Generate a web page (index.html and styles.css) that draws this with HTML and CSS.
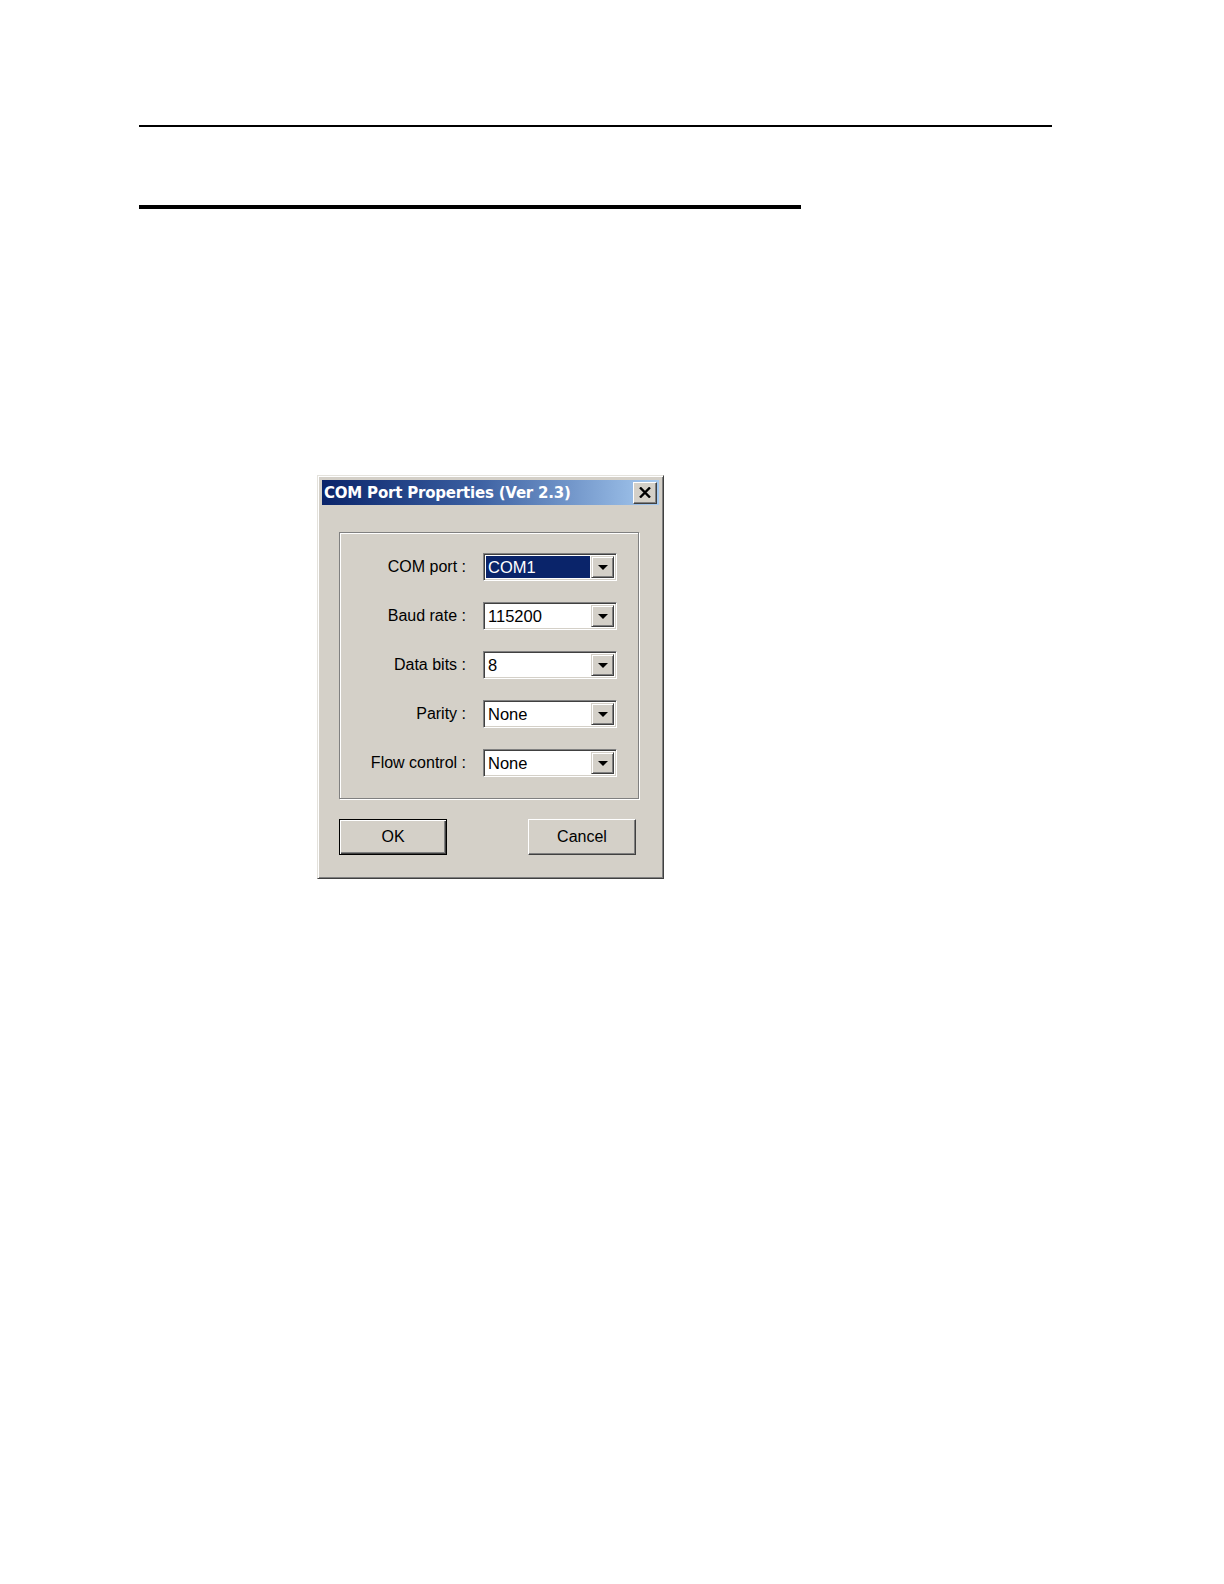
FILE: index.html
```html
<!DOCTYPE html>
<html>
<head>
<meta charset="utf-8">
<link rel="stylesheet" href="styles.css">
</head>
<body>
<div class="page">
  <div class="rule-top"></div>
  <div class="rule-second"></div>
  <div class="dialog">
    <div class="titlebar">
      <span class="title">COM Port Properties (Ver 2.3)</span>
      <span class="close"><svg width="12" height="11" viewBox="0 0 12 11"><path d="M1 0.5 L11 10.5 M11 0.5 L1 10.5" stroke="#000" stroke-width="2.4" fill="none"/></svg></span>
    </div>
    <div class="body">
      <div class="group">
        <div class="grid">
          <div class="label">COM port :</div>
          <div class="combo"><span class="value selected">COM1</span><span class="drop"><span class="arrow"></span></span></div>
          <div class="label">Baud rate :</div>
          <div class="combo"><span class="value">115200</span><span class="drop"><span class="arrow"></span></span></div>
          <div class="label">Data bits :</div>
          <div class="combo"><span class="value">8</span><span class="drop"><span class="arrow"></span></span></div>
          <div class="label">Parity :</div>
          <div class="combo"><span class="value">None</span><span class="drop"><span class="arrow"></span></span></div>
          <div class="label">Flow control :</div>
          <div class="combo"><span class="value">None</span><span class="drop"><span class="arrow"></span></span></div>
        </div>
      </div>
      <div class="buttons">
        <div class="btn default">OK</div>
        <div class="btn">Cancel</div>
      </div>
    </div>
  </div>
</div>
</body>
</html>
```
FILE: styles.css
```css
html, body {
  margin: 0;
  padding: 0;
  background: #ffffff;
}
.page {
  padding-top: 125px;
  padding-left: 139px;
}
.rule-top {
  width: 913px;
  height: 2px;
  background: #000;
}
.rule-second {
  margin-top: 78px;
  width: 662px;
  height: 4px;
  background: #000;
}
.dialog {
  margin-top: 266px;
  margin-left: 178px;
  width: 347px;
  height: 404px;
  box-sizing: border-box;
  background: #d4d0c8;
  border: 1px solid;
  border-color: #e4e2dc #404040 #404040 #e4e2dc;
  box-shadow: inset 1px 1px #ffffff, inset -1px -1px #808080;
  padding: 4px;
  font-family: "Liberation Sans", Arial, sans-serif;
}
.titlebar {
  height: 25px;
  background: linear-gradient(to right, #0a246a 0%, #3a5ea0 45%, #a6caf0 100%);
  display: flex;
  align-items: center;
  justify-content: space-between;
  padding: 0 2px 0 2px;
}
.title {
  color: #fff;
  font-family: "DejaVu Sans", Verdana, sans-serif;
  font-weight: bold;
  font-size: 15px;
  letter-spacing: -0.2px;
}
.close {
  width: 24px;
  height: 22px;
  box-sizing: border-box;
  background: #d4d0c8;
  border: 1px solid;
  border-color: #ffffff #404040 #404040 #ffffff;
  box-shadow: inset -1px -1px #808080;
  display: flex;
  align-items: center;
  justify-content: center;
}
.body {
  padding: 27px 0 0 17px;
}
.group {
  width: 300px;
  height: 267px;
  box-sizing: border-box;
  border: 1px solid #808080;
  box-shadow: inset 1px 1px #ffffff, 1px 1px #ffffff;
  padding-top: 20px;
}
.grid {
  display: grid;
  grid-template-columns: 126px 134px;
  column-gap: 17px;
  row-gap: 21px;
  align-items: center;
}
.label {
  text-align: right;
  font-size: 16px;
  color: #000;
}
.combo {
  height: 28px;
  box-sizing: border-box;
  border: 1px solid;
  border-color: #808080 #ffffff #ffffff #808080;
  box-shadow: inset 1px 1px #404040, inset -1px -1px #d4d0c8;
  background: #fff;
  display: flex;
  padding: 2px;
}
.value {
  flex: 1;
  font-size: 16.5px;
  line-height: 22px;
  padding-left: 2px;
  color: #000;
  margin-right: 1px;
}
.value.selected {
  background: #0a246a;
  color: #fff;
}
.drop {
  width: 23px;
  box-sizing: border-box;
  background: #d4d0c8;
  border: 1px solid;
  border-color: #d4d0c8 #404040 #404040 #d4d0c8;
  box-shadow: inset 1px 1px #ffffff, inset -1px -1px #808080;
  display: flex;
  align-items: center;
  justify-content: center;
}
.arrow {
  width: 0;
  height: 0;
  border-left: 5px solid transparent;
  border-right: 5px solid transparent;
  border-top: 5px solid #000;
  margin-top: 1px;
}
.buttons {
  margin-top: 20px;
  display: flex;
  justify-content: space-between;
  width: 297px;
}
.btn {
  width: 108px;
  height: 36px;
  box-sizing: border-box;
  border: 1px solid;
  border-color: #ffffff #404040 #404040 #ffffff;
  box-shadow: inset -1px -1px #808080;
  display: flex;
  align-items: center;
  justify-content: center;
  font-size: 16px;
  color: #000;
}
.btn.default {
  border: 1px solid #000;
  box-shadow: inset 1px 1px #ffffff, inset -1px -1px #404040, inset -2px -2px #808080;
}
```
